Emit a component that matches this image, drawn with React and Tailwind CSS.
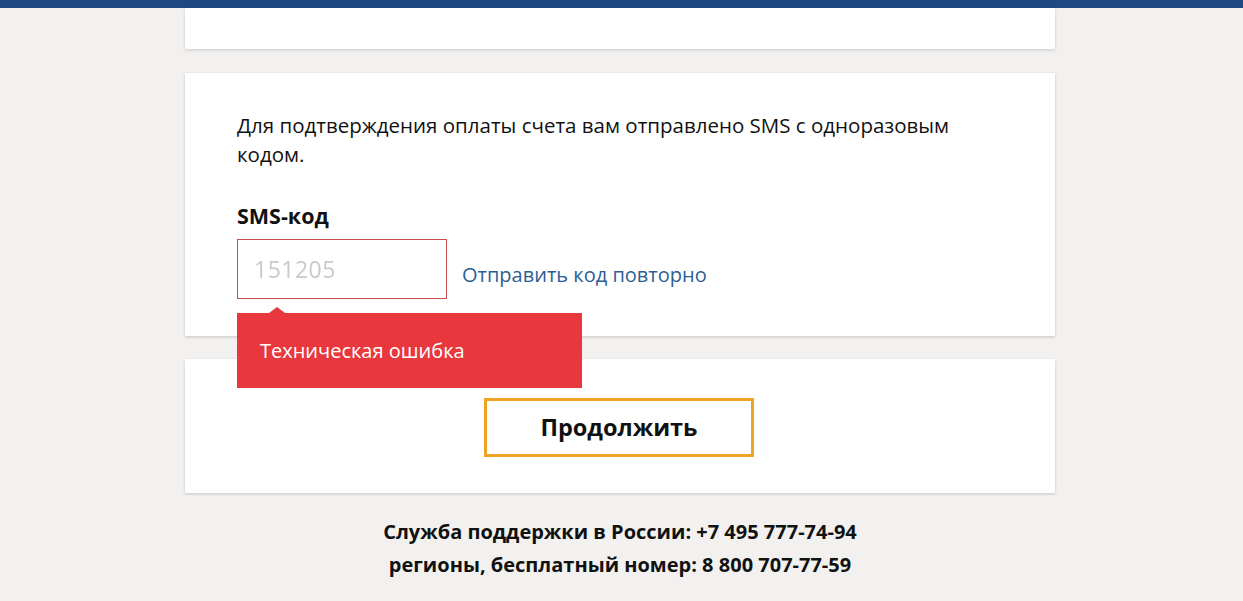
export default function App() {
  const font = { fontFamily: '"Open Sans", "Noto Sans", sans-serif' };
  return (
    <div className="w-full h-[601px] bg-[#f2f1ef] overflow-hidden" style={font}>
      <div className="h-2 bg-[#1c4a80]" />
      <div className="w-[870px] ml-[185px] flex flex-col">
        <div className="h-[41px] bg-white shadow-[0_1px_3px_rgba(0,0,0,0.18)]" />
        <div className="mt-[24px] h-[263px] bg-white shadow-[0_1px_3px_rgba(0,0,0,0.18)] px-[52px] pt-[38px] relative z-10">
          <p className="text-[20.5px] leading-[29px] text-[#111] w-[730px]">
            Для подтверждения оплаты счета вам отправлено SMS с одноразовым кодом.
          </p>
          <div className="mt-[34px] text-[21.5px] leading-[26px] font-bold text-[#111]">SMS-код</div>
          <div className="mt-[10px] flex items-center">
            <div className="w-[210px] h-[60px] border border-[#c4504f] flex items-center pl-[16px]">
              <span className="text-[23px] text-[#cacaca] blur-[0.7px] tracking-[0.5px]">151205</span>
            </div>
            <a className="ml-[15px] mt-[12px] text-[20px] text-[#2d5f93]">Отправить код повторно</a>
          </div>
          <div className="absolute left-[52px] top-[240px] w-[345px] h-[75px] bg-[#e8383d] flex items-center pl-[23px]">
            <div className="absolute -top-[6px] left-[32px] w-0 h-0 border-l-[8px] border-r-[8px] border-b-[6px] border-l-transparent border-r-transparent border-b-[#e8383d]" />
            <span className="text-white text-[20px]">Техническая ошибка</span>
          </div>
        </div>
        <div className="mt-[23px] h-[134px] bg-white shadow-[0_1px_3px_rgba(0,0,0,0.18)] flex justify-center pt-[39px]">
          <div className="ml-[-2px] w-[270px] h-[59px] border-[3px] border-[#f0a126] flex items-center justify-center">
            <span className="text-[23.5px] font-bold text-[#111]">Продолжить</span>
          </div>
        </div>
        <div className="mt-[22px] text-center text-[20px] leading-[33px] font-bold text-[#111]">
          <div>Служба поддержки в России: +7 495 777-74-94</div>
          <div>регионы, бесплатный номер: 8 800 707-77-59</div>
        </div>
      </div>
    </div>
  );
}
